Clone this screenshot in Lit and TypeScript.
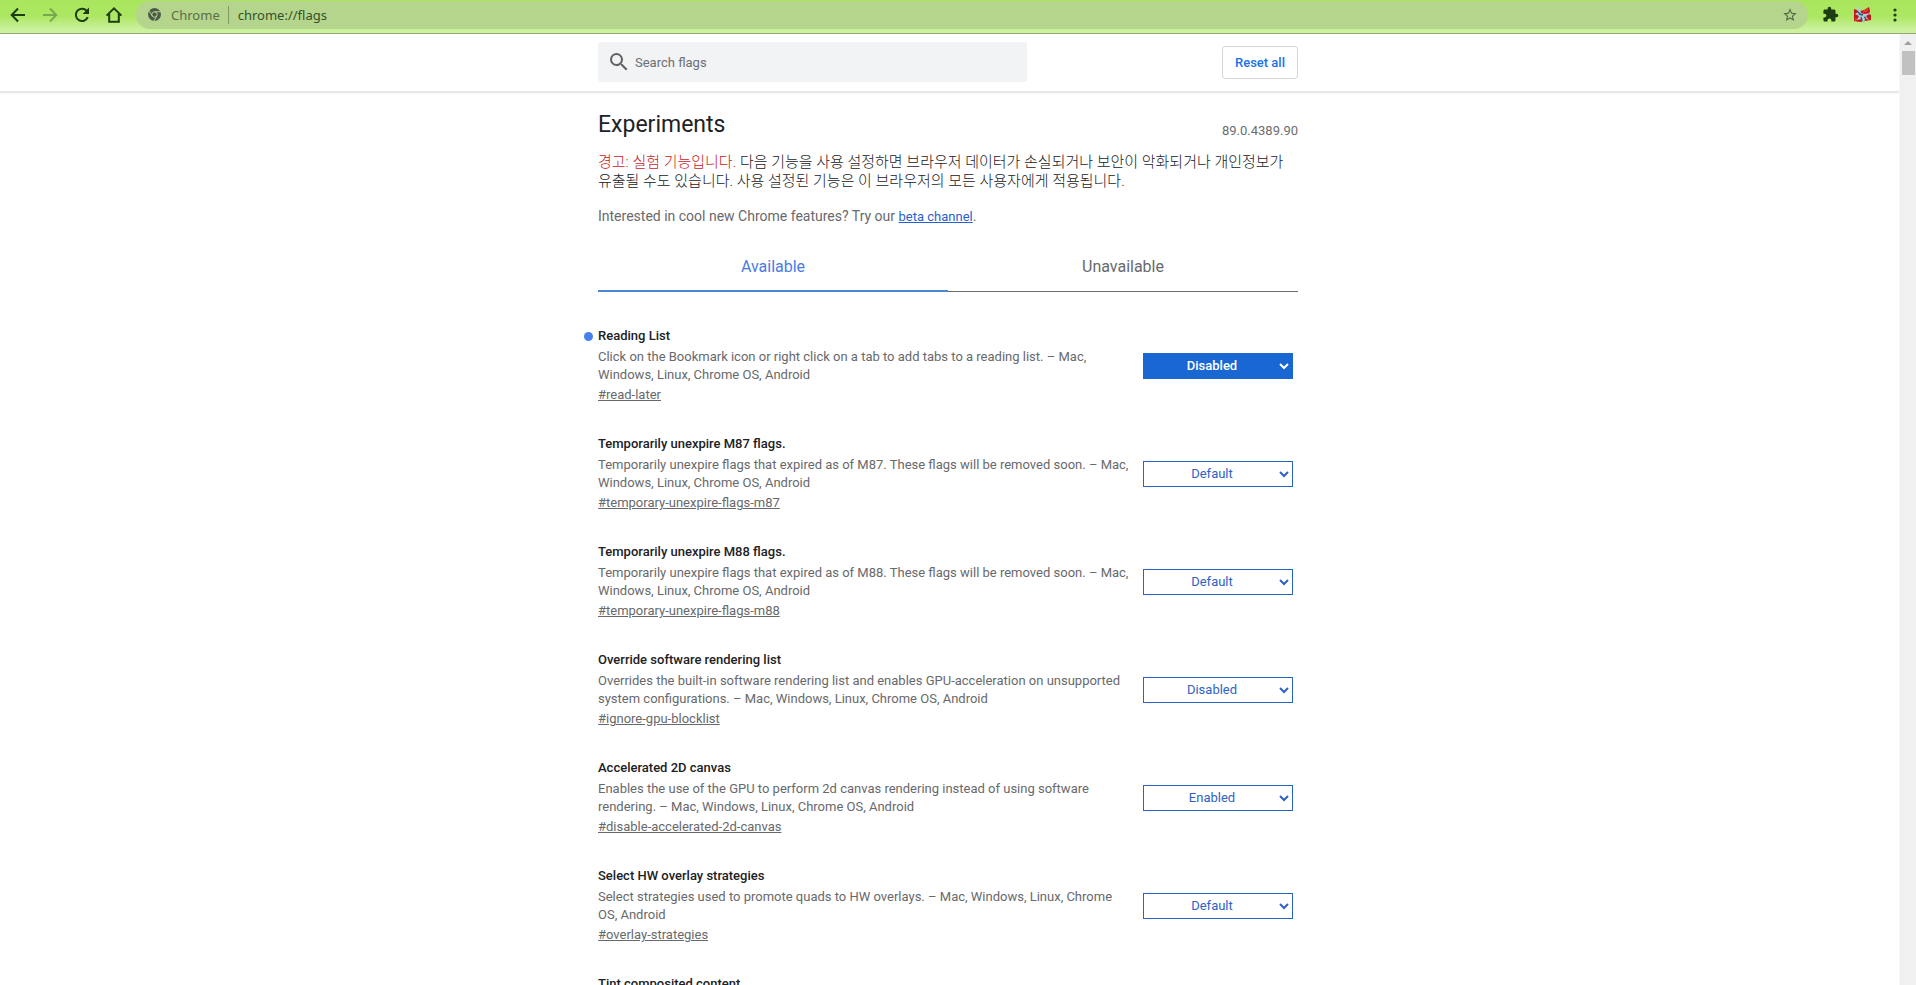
import { LitElement, html, css } from "lit";
import { customElement, property, state } from "lit/decorators.js";

interface Flag {
  id: string;
  title: string;
  text: string;
  platforms: string;
  value: string;
  changed?: boolean;
}

const ALL = "Mac, Windows, Linux, Chrome OS, Android";

const FLAGS: Flag[] = [
  { id: "read-later", title: "Reading List", text: "Click on the Bookmark icon or right click on a tab to add tabs to a reading list.", platforms: ALL, value: "Disabled", changed: true },
  { id: "temporary-unexpire-flags-m87", title: "Temporarily unexpire M87 flags.", text: "Temporarily unexpire flags that expired as of M87. These flags will be removed soon.", platforms: ALL, value: "Default" },
  { id: "temporary-unexpire-flags-m88", title: "Temporarily unexpire M88 flags.", text: "Temporarily unexpire flags that expired as of M88. These flags will be removed soon.", platforms: ALL, value: "Default" },
  { id: "ignore-gpu-blocklist", title: "Override software rendering list", text: "Overrides the built-in software rendering list and enables GPU-acceleration on unsupported system configurations.", platforms: ALL, value: "Disabled" },
  { id: "disable-accelerated-2d-canvas", title: "Accelerated 2D canvas", text: "Enables the use of the GPU to perform 2d canvas rendering instead of using software rendering.", platforms: ALL, value: "Enabled" },
  { id: "overlay-strategies", title: "Select HW overlay strategies", text: "Select strategies used to promote quads to HW overlays.", platforms: ALL, value: "Default" },
  { id: "tint-composited-content", title: "Tint composited content", text: "Tint contents composited using Viz with a shade of red to help debug and study overlay support.", platforms: ALL, value: "Default" },
];

@customElement("browser-toolbar")
class BrowserToolbar extends LitElement {
  static styles = css`
    :host {
      display: block;
      flex: none;
      font-family: "Noto Sans", "Noto Sans CJK KR", sans-serif;
    }
    .bar {
      display: flex;
      align-items: center;
      box-sizing: border-box;
      height: 34px;
      padding: 0 11px 4px 8px;
      border-bottom: 1px solid #93a873;
      background: linear-gradient(#a9e65c, #ade763 50%, #c9f09a 85%, #cdf2a0);
    }
    button {
      display: flex;
      padding: 0;
      border: 0;
      background: none;
      color: #1c3d12;
    }
    svg { display: block; }
    .nav { display: flex; gap: 12px; }
    .nav .dim { color: #78a850; }
    .omnibox {
      display: flex;
      align-items: center;
      flex: 1;
      box-sizing: border-box;
      height: 28px;
      margin-left: 12px;
      padding: 0 10px 0 12px;
      border-radius: 14px;
      background: #b5d58d;
      font-size: 13px;
      line-height: 18px;
    }
    .label {
      margin-left: 10px;
      padding-right: 8px;
      border-right: 1px solid #7f9a62;
      color: #5a6f45;
    }
    .address {
      flex: 1;
      min-width: 0;
      margin-left: 9px;
      padding: 0;
      border: 0;
      outline: 0;
      background: none;
      color: #35502a;
      font: inherit;
    }
    .tools { display: flex; align-items: center; gap: 13px; margin-left: 14px; }
  `;

  render() {
    return html`
      <header class="bar">
        <nav class="nav" aria-label="Navigation">
          <button aria-label="Back">
            <svg width="20" height="20" viewBox="0 0 20 20" fill="none" stroke="currentColor" stroke-width="2"><path d="M17 10H4M10 3.5 3.7 10l6.3 6.5" /></svg>
          </button>
          <button class="dim" aria-label="Forward">
            <svg width="20" height="20" viewBox="0 0 20 20" fill="none" stroke="currentColor" stroke-width="2"><path d="M3 10h13M10 3.5l6.3 6.5-6.3 6.5" /></svg>
          </button>
          <button aria-label="Reload">
            <svg width="20" height="20" viewBox="0 0 20 20" fill="none" stroke="currentColor" stroke-width="2"><path d="M15.8 12.2A6.2 6.2 0 1 1 14.6 5.6" /><path d="M17 2.6V9h-6.4z" fill="currentColor" stroke="none" /></svg>
          </button>
          <button aria-label="Home">
            <svg width="20" height="20" viewBox="0 0 20 20" fill="none" stroke="currentColor" stroke-width="2"><path d="M2.6 10.6 10 3.4l7.4 7.2M5.2 9v7.8h9.6V9" /></svg>
          </button>
        </nav>
        <div class="omnibox">
          <svg width="13" height="13" viewBox="0 0 24 24">
            <circle cx="12" cy="12" r="12" fill="#4c5a4a" />
            <circle cx="12" cy="12" r="5" fill="none" stroke="#b5d58d" stroke-width="1.8" />
            <path d="M12 7h11M7.7 14.5 2.2 5M16.3 14.5 11 24" stroke="#b5d58d" stroke-width="1.8" />
          </svg>
          <span class="label">Chrome</span>
          <input class="address" aria-label="Address" .value=${"chrome://flags"} />
          <button aria-label="Bookmark this page">
            <svg width="16" height="16" viewBox="0 0 24 24" fill="#4e6640"><path d="M22 9.24l-7.19-.62L12 2 9.19 8.63 2 9.24l5.46 4.73L5.82 21 12 17.27 18.18 21l-1.63-7.03L22 9.24zM12 15.4l-3.76 2.27 1-4.28-3.32-2.88 4.38-.38L12 6.1l1.71 4.04 4.38.38-3.32 2.88 1 4.28L12 15.4z" /></svg>
          </button>
        </div>
        <div class="tools">
          <button aria-label="Extensions">
            <svg width="17" height="17" viewBox="0 0 24 24" fill="currentColor"><path d="M20.5 11H19V7c0-1.1-.9-2-2-2h-4V3.5a2.5 2.5 0 0 0-5 0V5H4c-1.1 0-2 .9-2 2v3.8h1.5c1.5 0 2.7 1.200 2.7 2.7S5 16.2 3.5 16.2H2V20c0 1.100.9 2 2 2h3.800v-1.500c0-1.500 1.200-2.700 2.700-2.700s2.700 1.200 2.700 2.700V22H17c1.100 0 2-.9 2-2v-4h1.500a2.500 2.500 0 0 0 0-5z" /></svg>
          </button>
          <button aria-label="Profile">
            <svg width="20" height="20" viewBox="0 0 20 20">
              <path d="M2 4l6 2 4-1 5-3 1 4-1 3 2 1v5l-6 1-5 1-6-1z" fill="#c4151c" />
              <path d="M11 6l5-3v3l-5 2zM3 13l5 1-5 2z" fill="#e23a3a" />
              <path d="M3 2l2 3 1-4 2 3 1 4 3 1 7-1-5 3 3 4-4-2-1 6-3-5-4 1 2-4-4-2 3-2z" fill="#a8cfd6" />
              <path d="M5 6l3 3M9 12l1 4M7 9l4 1M12 12l2 1" stroke="#2c4f72" stroke-width="1.3" />
            </svg>
          </button>
          <button aria-label="Menu">
            <svg width="20" height="20" viewBox="0 0 20 20" fill="currentColor"><circle cx="10" cy="5" r="1.6" /><circle cx="10" cy="10" r="1.6" /><circle cx="10" cy="15" r="1.6" /></svg>
          </button>
        </div>
      </header>
    `;
  }
}

@customElement("flag-item")
class FlagItem extends LitElement {
  @property({ attribute: false }) flag!: Flag;

  static styles = css`
    :host { display: block; }
    .item {
      display: flex;
      align-items: center;
      gap: 12px;
      padding-right: 5px;
      font-size: 13px;
      line-height: 18px;
      color: #68696c;
    }
    .text { flex: 1; min-width: 0; }
    .title {
      position: relative;
      margin: 0 0 3px;
      font-size: 13px;
      font-weight: 500;
      color: #202124;
    }
    .changed::before {
      content: "";
      position: absolute;
      left: -14px;
      top: 5px;
      width: 9px;
      height: 9px;
      border-radius: 50%;
      background: #4680ee;
    }
    .desc { margin: 0 0 2px; }
    .link { color: inherit; }
    select {
      width: 150px;
      height: 26px;
      border: 1px solid #2a63c4;
      border-radius: 0;
      background: #fff;
      color: #2f62c4;
      font: 13px Roboto, sans-serif;
      text-align-last: center;
    }
    .on {
      border-color: #1967d2;
      background: #1967d2;
      color: #fff;
      font-weight: 500;
    }
  `;

  render() {
    const f = this.flag;
    return html`
      <article class="item">
        <div class="text">
          <h3 class="title ${f.changed ? "changed" : ""}"><label for="choice">${f.title}</label></h3>
          <p class="desc">${f.text} – ${f.platforms}</p>
          <a class="link" href="#${f.id}">#${f.id}</a>
        </div>
        <select id="choice" class=${f.changed ? "on" : ""}>
          ${["Default", "Enabled", "Disabled"].map((o) => html`<option ?selected=${o === f.value}>${o}</option>`)}
        </select>
      </article>
    `;
  }
}

@customElement("app-root")
class AppRoot extends LitElement {
  @state() private tab = 0;

  static styles = css`
    :host {
      display: flex;
      flex-direction: column;
      height: 100vh;
      overflow: hidden;
      background: #fff;
      color: #202124;
      font-family: Roboto, "Noto Sans CJK KR", sans-serif;
      font-size: 13px;
    }
    .view { display: flex; flex: 1; min-height: 0; }
    .page { flex: 1; min-width: 0; overflow: hidden; }
    .top {
      padding: 8px 3px 9px 0;
      box-shadow: 0 2px 0 #e8e8e9, 0 3px 0 #f8f8f8;
    }
    .column { max-width: 700px; margin: 0 auto; }
    .tools { display: flex; align-items: center; justify-content: space-between; }
    .search {
      display: flex;
      align-items: center;
      gap: 4px;
      box-sizing: border-box;
      width: 429px;
      height: 40px;
      padding: 0 9px;
      border-radius: 3px;
      background: #f1f3f4;
      color: #5f6368;
    }
    .search input {
      flex: 1;
      min-width: 0;
      padding: 0;
      border: 0;
      outline: 0;
      background: none;
      font: inherit;
    }
    .search input::placeholder { color: #6c6f73; }
    .reset {
      height: 33px;
      padding: 0 12px;
      border: 1px solid #d4d7dc;
      border-radius: 3px;
      background: #fff;
      color: #1a73e8;
      font: 500 13px Roboto, sans-serif;
    }
    .body { padding-right: 3px; }
    .heading {
      display: flex;
      align-items: flex-start;
      justify-content: space-between;
      padding-top: 21px;
    }
    h1 { margin: 0; font-size: 23px; font-weight: 400; line-height: 26px; }
    .version { padding-top: 11px; line-height: 16px; color: #6c6d70; }
    .warning {
      margin: 14px 0 0;
      font-size: 15px;
      font-weight: 300;
      line-height: 19px;
      word-break: keep-all;
    }
    .red { color: #c5221f; }
    .promo { margin: 16px 0 0; font-size: 14px; line-height: 18px; color: #68696c; }
    .promo a { color: #2a5fd0; font-size: 13px; }
    .tabs { display: flex; margin-top: 24px; }
    .tab {
      flex: 1;
      height: 42px;
      padding: 0 0 8px;
      border: 0;
      border-bottom: 1px solid #6a6c70;
      background: none;
      color: #68696c;
      font: 16px Roboto, sans-serif;
    }
    .tab.active { border-bottom: 2px solid #4a86d4; color: #4a7ae8; }
    .list { display: flex; flex-direction: column; gap: 31px; padding-top: 35px; }
    .scrollbar {
      display: flex;
      flex-direction: column;
      align-items: center;
      box-sizing: border-box;
      width: 17px;
      padding-top: 7px;
      border-left: 1px solid #f8f8f8;
      background: #f0f0f0;
    }
    .thumb { width: 13px; height: 24px; margin-top: 6px; background: #c1c1c1; }
    svg { display: block; }
  `;

  render() {
    return html`
      <browser-toolbar></browser-toolbar>
      <div class="view">
        <div class="page">
          <header class="top">
            <div class="column tools">
              <label class="search">
                <svg width="24" height="24" viewBox="0 0 24 24" fill="currentColor"><path d="M15.5 14h-.79l-.28-.27A6.471 6.471 0 0 0 16 9.5 6.5 6.5 0 1 0 9.5 16c1.61 0 3.09-.59 4.23-1.57l.27.28v.79l5 4.99L20.49 19l-4.99-5zm-6 0C7.01 14 5 11.99 5 9.5S7.01 5 9.5 5 14 7.01 14 9.5 11.99 14 9.5 14z" /></svg>
                <input type="text" placeholder="Search flags" aria-label="Search flags" />
              </label>
              <button class="reset">Reset all</button>
            </div>
          </header>
          <main class="body">
            <div class="column">
              <div class="heading">
                <h1>Experiments</h1>
                <span class="version">89.0.4389.90</span>
              </div>
              <p class="warning"><span class="red">경고: 실험 기능입니다.</span> 다음 기능을 사용 설정하면 브라우저 데이터가 손실되거나 보안이 악화되거나 개인정보가 유출될 수도 있습니다. 사용 설정된 기능은 이 브라우저의 모든 사용자에게 적용됩니다.</p>
              <p class="promo">Interested in cool new Chrome features? Try our <a href="#beta">beta channel</a>.</p>
              <div class="tabs" role="tablist">
                ${["Available", "Unavailable"].map((t, i) => html`
                  <button class="tab ${this.tab === i ? "active" : ""}" role="tab" aria-selected=${this.tab === i} @click=${() => (this.tab = i)}>${t}</button>`)}
              </div>
              <div class="list">
                ${FLAGS.map((f) => html`<flag-item .flag=${f}></flag-item>`)}
              </div>
            </div>
          </main>
        </div>
        <div class="scrollbar" aria-hidden="true">
          <svg width="8" height="4" viewBox="0 0 8 4"><path d="M0 4l4-4 4 4z" fill="#a0a0a0" /></svg>
          <div class="thumb"></div>
        </div>
      </div>
    `;
  }
}
